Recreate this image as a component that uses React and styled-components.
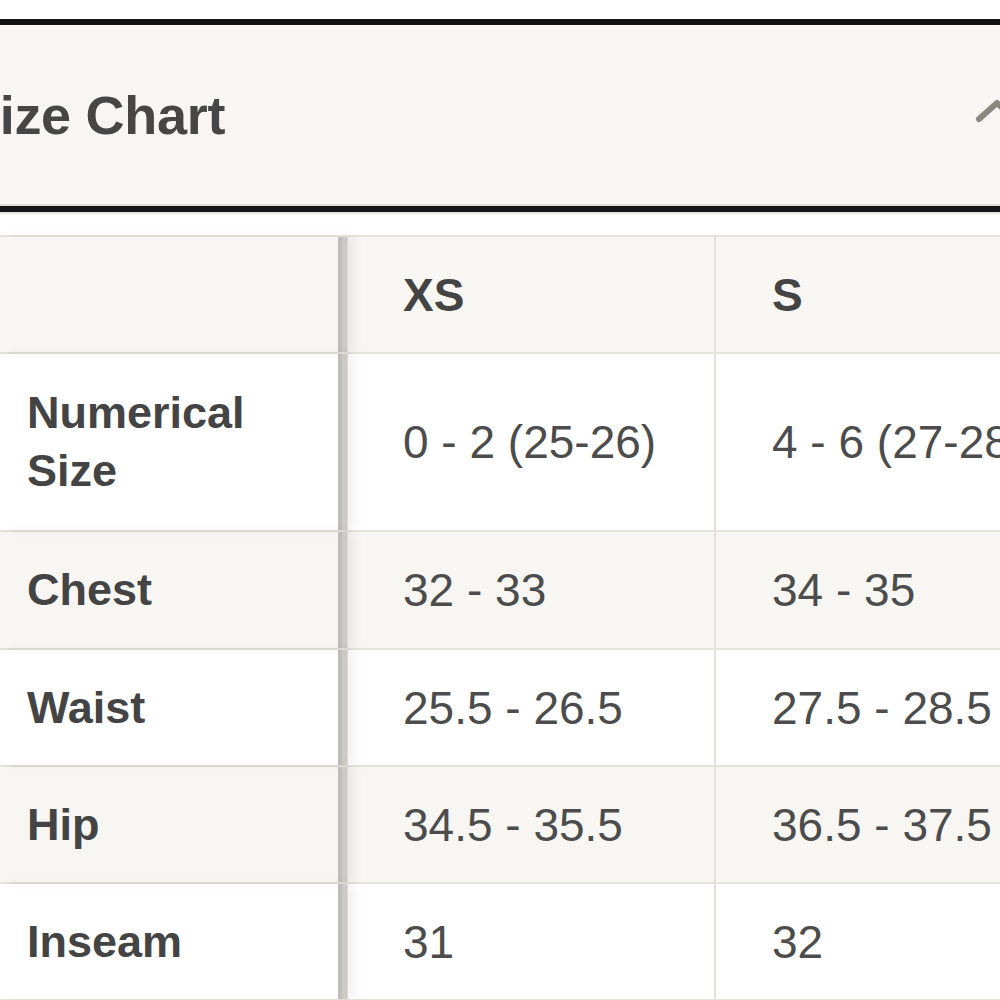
import React from "react";
import styled, { createGlobalStyle } from "styled-components";

const GlobalStyle = createGlobalStyle`
  html, body {
    margin: 0;
    padding: 0;
    background: #ffffff;
    overflow: hidden;
  }
  * {
    box-sizing: border-box;
  }
`;

const Page = styled.div`
  width: 1000px;
  height: 1000px;
  overflow: hidden;
  padding-top: 19px;
  background: #ffffff;
  font-family: "Liberation Sans", Arial, sans-serif;
  color: #484848;
`;

const AccordionHead = styled.div`
  margin-left: -60px;
  width: 1100px;
  height: 193px;
  display: flex;
  align-items: center;
  justify-content: space-between;
  padding: 0 81px 0 24px;
  background: #f7f6f4;
  border-top: 6px solid #141414;
  border-bottom: 6px solid #141414;
  box-shadow: inset 0 -2px 0 #dedcd6, 0 2px 0 #e4e2dc;
`;

const Title = styled.h2`
  margin: 0 0 2px 0;
  font-size: 54px;
  font-weight: 700;
  letter-spacing: -0.3px;
  color: #464646;
`;

const Chevron = styled.svg`
  width: 44px;
  height: 24px;
  margin-bottom: 10px;
  margin-right: -60px;
  flex-shrink: 0;
`;

const Chart = styled.div`
  margin-top: 23px;
  width: 1100px;
  border-top: 2px solid #e6e3dc;
`;

const Row = styled.div`
  display: grid;
  grid-template-columns: 347px 367px 386px;
  height: ${(p) => p.$h}px;
  background: ${(p) => (p.$shade ? "#f7f6f3" : "#ffffff")};
  border-bottom: 2px solid #e6e3dc;
`;

const LabelCell = styled.div`
  position: relative;
  z-index: 1;
  display: flex;
  align-items: center;
  padding-left: 27px;
  font-size: 45px;
  font-weight: 700;
  line-height: 58px;
  color: #444444;
  border-right: 9px solid #cbcac6;
  box-shadow: 1px 0 0 #d9d8d4, 8px 0 10px rgba(0, 0, 0, 0.06);
  &::before {
    content: "";
    position: absolute;
    right: 0;
    top: 0;
    bottom: 0;
    width: 4px;
    background: #bebdb9;
    margin-right: 5px;
    transform: translateX(9px);
  }
`;

const ValueCell = styled.div`
  display: flex;
  align-items: center;
  padding-left: 56px;
  font-size: 46px;
  font-weight: ${(p) => (p.$head ? 700 : 400)};
  color: ${(p) => (p.$head ? "#444444" : "#4c4c4c")};
  white-space: nowrap;
  border-left: ${(p) => (p.$last ? "2px solid #e3e0d9" : "none")};
`;

const rows = [
  { label: "Numerical Size", xs: "0 - 2 (25-26)", s: "4 - 6 (27-28)", h: 178 },
  { label: "Chest", xs: "32 - 33", s: "34 - 35", h: 118 },
  { label: "Waist", xs: "25.5 - 26.5", s: "27.5 - 28.5", h: 117 },
  { label: "Hip", xs: "34.5 - 35.5", s: "36.5 - 37.5", h: 117 },
  { label: "Inseam", xs: "31", s: "32", h: 117 },
];

const App = () => {
  return (
    <Page>
      <GlobalStyle />
      <AccordionHead>
        <Title>Size Chart</Title>
        <Chevron viewBox="0 0 44 24">
          <polyline
            points="4,20 22,4 40,20"
            fill="none"
            stroke="#8a897f"
            strokeWidth="6"
            strokeLinecap="round"
            strokeLinejoin="round"
          />
        </Chevron>
      </AccordionHead>
      <Chart>
        <Row $h={117} $shade>
          <LabelCell />
          <ValueCell $head>XS</ValueCell>
          <ValueCell $head $last>S</ValueCell>
        </Row>
        {rows.map((r, i) => (
          <Row key={r.label} $h={r.h} $shade={i % 2 === 1}>
            <LabelCell>
              {r.label === "Numerical Size" ? (
                <span>
                  Numerical
                  <br />
                  Size
                </span>
              ) : (
                r.label
              )}
            </LabelCell>
            <ValueCell>{r.xs}</ValueCell>
            <ValueCell $last>{r.s}</ValueCell>
          </Row>
        ))}
      </Chart>
    </Page>
  );
};

export default App;
